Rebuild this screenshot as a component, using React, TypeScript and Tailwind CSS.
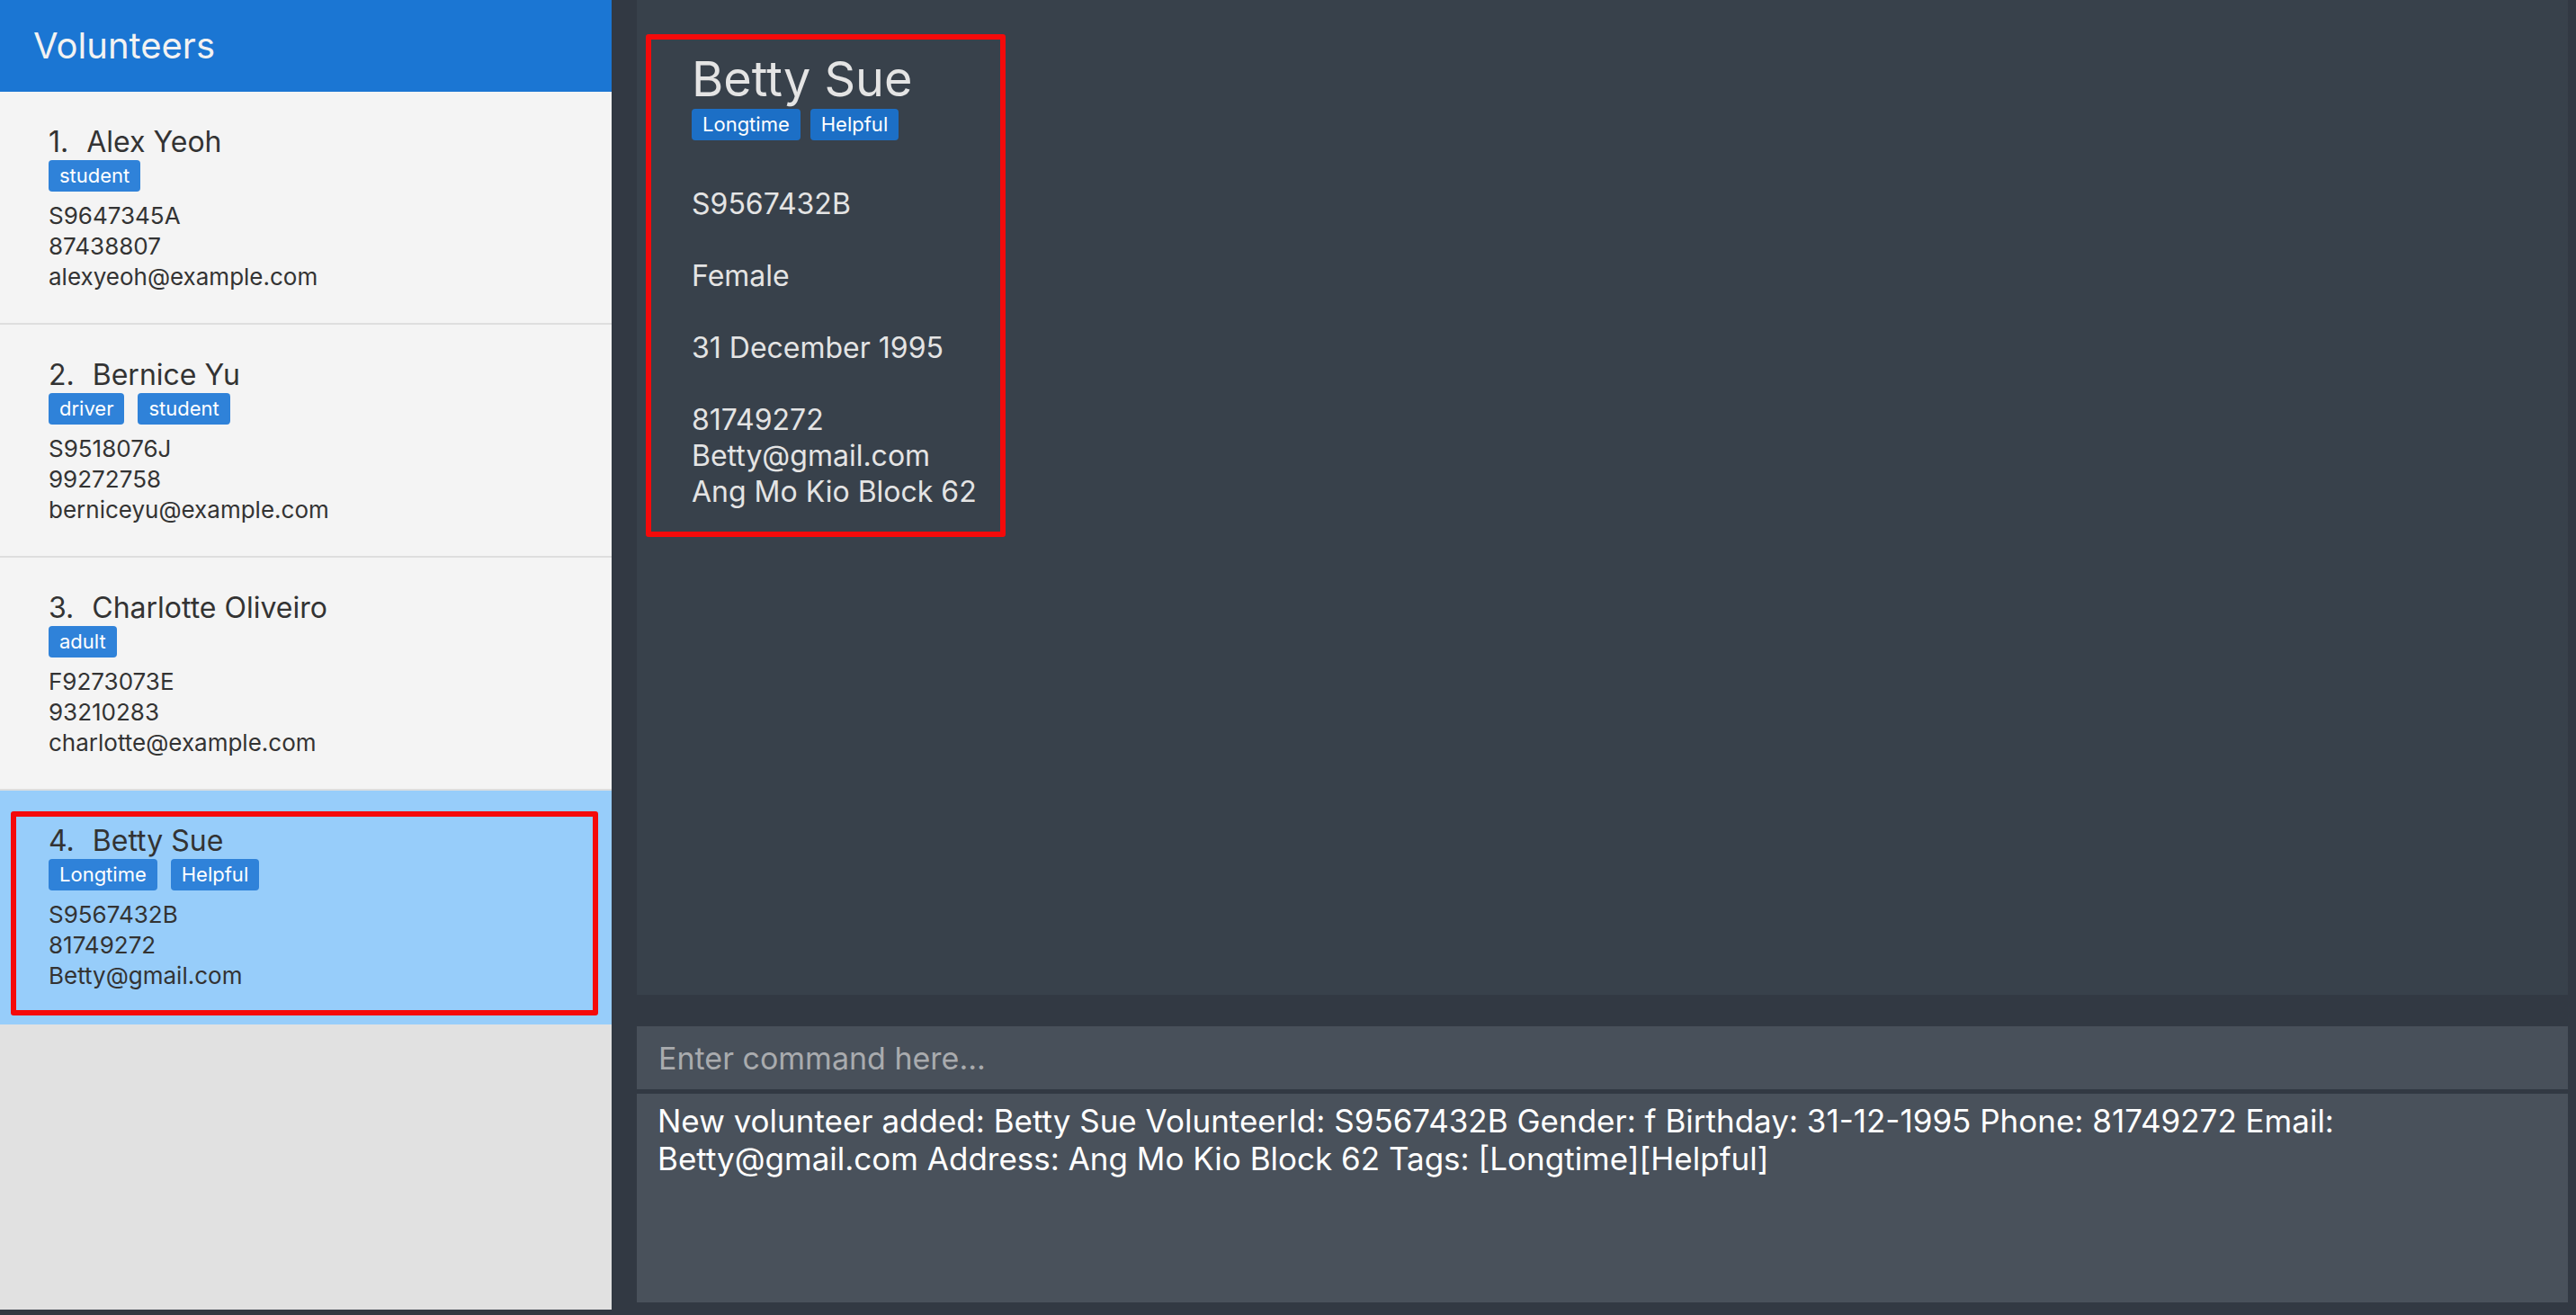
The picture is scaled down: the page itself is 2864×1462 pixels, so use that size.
import React from 'react';

interface Volunteer {
  index: number;
  name: string;
  tags: string[];
  id: string;
  phone: string;
  email: string;
}

const volunteers: Volunteer[] = [
  { index: 1, name: 'Alex Yeoh', tags: ['student'], id: 'S9647345A', phone: '87438807', email: 'alexyeoh@example.com' },
  { index: 2, name: 'Bernice Yu', tags: ['driver', 'student'], id: 'S9518076J', phone: '99272758', email: 'berniceyu@example.com' },
  { index: 3, name: 'Charlotte Oliveiro', tags: ['adult'], id: 'F9273073E', phone: '93210283', email: 'charlotte@example.com' },
  { index: 4, name: 'Betty Sue', tags: ['Longtime', 'Helpful'], id: 'S9567432B', phone: '81749272', email: 'Betty@gmail.com' },
];

const font = { fontFamily: 'Inter, "Noto Sans", sans-serif' };

const Tag: React.FC<{ label: string; dark?: boolean }> = ({ label, dark }) => (
  <span
    className={`inline-flex h-[35px] items-center rounded-[4px] px-[12px] text-[22px] text-white ${
      dark ? 'bg-[#1c6fc6]' : 'bg-[#2f82d9]'
    }`}
  >
    {label}
  </span>
);

const CardBody: React.FC<{ v: Volunteer }> = ({ v }) => (
  <div className="text-[#333333]">
    <div className="text-[32px] leading-[38px] whitespace-nowrap">
      {v.index}.<span className="ml-[20px]">{v.name}</span>
    </div>
    <div className="mt-px flex gap-[15px]">
      {v.tags.map(t => (
        <Tag key={t} label={t} />
      ))}
    </div>
    <div className="mt-[10px] text-[26px] leading-[34px]">
      <div>{v.id}</div>
      <div>{v.phone}</div>
      <div>{v.email}</div>
    </div>
  </div>
);

const VolunteerCard: React.FC<{ v: Volunteer; selected?: boolean }> = ({ v, selected }) => {
  if (selected) {
    // highlighted row with the red annotation box
    return (
      <div className="bg-[#97cdfa] pt-[23px] pb-[10px] pl-[12px] pr-[15px]">
        <div className="rounded-[3px] border-[6px] border-[#f50a0a] pt-[8px] pb-[21px] pl-[36px]">
          <CardBody v={v} />
        </div>
      </div>
    );
  }
  return (
    <div className="border-b-2 border-[#dedede] bg-[#f4f4f4] pt-[37px] pb-[34px] pl-[54px]">
      <CardBody v={v} />
    </div>
  );
};

const DetailPanel: React.FC = () => (
  <div className="flex-1 bg-[#38414b] pt-[38px] pl-[10px]">
    <div className="w-[400px] rounded-[3px] border-[6px] border-[#f50a0a] pt-[11px] pb-[24px] pl-[45px] text-[#e4e4e4]">
      <div className="text-[54px] leading-[65px]">Betty Sue</div>
      <div className="mt-px flex gap-[11px]">
        <Tag label="Longtime" dark />
        <Tag label="Helpful" dark />
      </div>
      <div className="mt-[51px] text-[32px] leading-[40px]">
        <div>S9567432B</div>
        <div className="h-[40px]" />
        <div>Female</div>
        <div className="h-[40px]" />
        <div>31 December 1995</div>
        <div className="h-[40px]" />
        <div>81749272</div>
        <div>Betty@gmail.com</div>
        <div>Ang Mo Kio Block 62</div>
      </div>
    </div>
  </div>
);

export default function App() {
  return (
    <div className="flex h-[1462px] w-[2864px] bg-[#323943]" style={font}>
      {/* list */}
      <div className="flex w-[680px] flex-col pb-[6px]">
        <div className="flex h-[102px] items-center bg-[#1b76d3] pl-[37px] text-[40px] text-[#f2f2f2]">
          Volunteers
        </div>
        <div className="flex-1 bg-[#e1e1e1]">
          {volunteers.map(v => (
            <VolunteerCard key={v.index} v={v} selected={v.index === 4} />
          ))}
        </div>
      </div>

      {/* right side */}
      <div className="flex flex-1 flex-col pl-[28px] pr-[9px] pb-[14px]">
        <DetailPanel />
        <div className="mt-[35px] flex h-[70px] items-center bg-[#48505a] pl-[24px] text-[34px] text-[#a9abae]">
          Enter command here...
        </div>
        <div className="mt-[5px] h-[232px] bg-[#49515b] pt-[9px] pl-[23px] text-[35px] leading-[42px] text-white">
          <div className="whitespace-nowrap">
            New volunteer added: Betty Sue VolunteerId: S9567432B Gender: f Birthday: 31-12-1995 Phone: 81749272 Email:
          </div>
          <div className="whitespace-nowrap">
            Betty@gmail.com Address: Ang Mo Kio Block 62 Tags: [Longtime][Helpful]
          </div>
        </div>
      </div>
    </div>
  );
}
